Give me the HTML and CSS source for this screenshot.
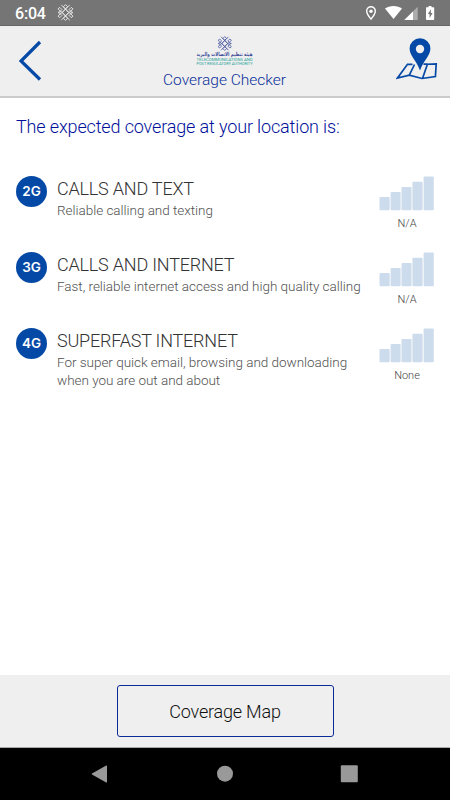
FILE: index.html
```
<!DOCTYPE html>
<html lang="en">
<head>
  <meta charset="UTF-8" />
  <meta name="viewport" content="width=device-width, initial-scale=1" />
  <title>Coverage Checker</title>
  <link rel="stylesheet" href="styles.css">
</head>
<body>

  <svg class="defs" width="0" height="0">
    <symbol id="knot" viewBox="0 0 16 16">
      <path d="M8 4.8L11.2 8 8 11.2 4.8 8zM4 .8l8.2 8.2 2.8-.9M12 .8L3.8 9 1 8.1M4 15.2L12.2 7l2.8.9M12 15.2L3.8 7 1 7.9M8 .6l2 2-2 2-2-2zM8 11.4l2 2-2 2-2-2zM1 4.5l1.6-1.3 2 2L3 6.8zM15 4.5l-1.6-1.3-2 2L13 6.8zM1 11.5l1.6 1.3 2-2L3 9.2zM15 11.5l-1.6 1.3-2-2L13 9.2z" fill="none" stroke="currentColor" stroke-width=".9" />
    </symbol>
    <symbol id="bars" viewBox="0 0 56 36">
      <g fill="#cddcec">
        <rect x=".5" y="21" width="10.2" height="13.2" rx="1" />
        <rect x="11.6" y="16" width="10" height="18.2" rx="1" />
        <rect x="22.5" y="10.9" width="10" height="23.3" rx="1" />
        <rect x="33.4" y="5.8" width="10.2" height="28.4" rx="1" />
        <rect x="44.6" y=".5" width="10.2" height="33.7" rx="1" />
      </g>
    </symbol>
  </svg>

  <div class="status-bar">
    <span class="time">6:04</span>
    <svg class="status-knot" width="17" height="17"><use href="#knot" /></svg>
    <svg class="status-icons" width="76" height="26" viewBox="0 0 76 26" fill="#fff">
      <path d="M7 6.8a4.3 4.3 0 0 0-4.3 4.3c0 3.2 4.3 8 4.3 8s4.3-4.8 4.3-8A4.3 4.3 0 0 0 7 6.8z" fill="none" stroke="#fff" stroke-width="1.4" />
      <circle cx="7" cy="11.2" r="1.7" />
      <path d="M21 8.6C25.5 5 33.5 5 38 8.6L29.5 19z" />
      <path d="M53.7 6.8V20H40.3z" opacity=".4" />
      <path d="M49 11.5V20h-8.7z" />
      <path d="M62.5 7.2h2V5.9h3v1.3h2q.7 0 .7.7v11.3q0 .8-.8.8h-6.6q-.8 0-.8-.8V7.9q0-.7.5-.7z" />
      <path d="M67 9.2l-3.200 4.800h1.800v4l3-5h-1.800z" fill="#757575" />
    </svg>
  </div>

  <header>
    <svg width="24" height="42" viewBox="0 0 24 42">
      <path d="M21 2L2 21l19 18.5" fill="none" stroke="#0549a6" stroke-width="3.2" />
    </svg>
    <div class="brand">
      <svg class="logo" width="70" height="31" viewBox="0 0 70 31">
        <use href="#knot" x="28" y="0" width="15.5" height="15" color="#4d5aa3" />
        <text class="brand-ar" transform="translate(35.5 20.3) scale(.73 1)" text-anchor="middle" direction="rtl">هيئة تنظيم الاتصالات والبريد</text>
        <text class="brand-en" x="7.5" y="25" textLength="56" lengthAdjust="spacingAndGlyphs">TELECOMMUNICATIONS AND</text>
        <text class="brand-en" x="7.5" y="28.7" textLength="56" lengthAdjust="spacingAndGlyphs">POST REGULATORY AUTHORITY</text>
      </svg>
      <h1>Coverage Checker</h1>
    </div>
    <svg width="42" height="45" viewBox="0 0 42 45">
      <path d="M16.5 27.3h-5L1.5 41l11.800-2.800 12.700 3.300 13.400-2 .8-12.700-8.800.4-4.900 14.300M18.500 27.500l-5.200 10.700M27.500 27.200h4" fill="none" stroke="#0549a6" stroke-width="1.7" />
      <path d="M24 1.2A10.400 10.400 0 0 0 13.600 11.600c0 7 6.500 11.500 10.400 22 3.900-10.500 10.400-15 10.400-22A10.400 10.400 0 0 0 24 1.200z" fill="#0549a6" />
      <circle cx="24" cy="12" r="4.2" fill="#efefef" />
    </svg>
  </header>

  <main>
    <h2>The expected coverage at your location is:</h2>

    <div class="service">
      <span class="badge">2G</span>
      <div class="info">
        <h3>CALLS AND TEXT</h3>
        <p>Reliable calling and texting</p>
      </div>
      <div class="signal">
        <svg width="56" height="36"><use href="#bars" /></svg>
        <span>N/A</span>
      </div>
    </div>

    <div class="service">
      <span class="badge">3G</span>
      <div class="info">
        <h3>CALLS AND INTERNET</h3>
        <p>Fast, reliable internet access and high quality calling</p>
      </div>
      <div class="signal">
        <svg width="56" height="36"><use href="#bars" /></svg>
        <span>N/A</span>
      </div>
    </div>

    <div class="service">
      <span class="badge">4G</span>
      <div class="info">
        <h3>SUPERFAST INTERNET</h3>
        <p>For super quick email, browsing and downloading<br>when you are out and about</p>
      </div>
      <div class="signal">
        <svg width="56" height="36"><use href="#bars" /></svg>
        <span>None</span>
      </div>
    </div>
  </main>

  <footer>
    <button>Coverage Map</button>
  </footer>

  <nav>
    <svg width="18" height="20" viewBox="0 0 18 20" fill="#999"><path d="M16 2v16q0 .8-.8.4L1 10.4q-.8-.4 0-.8L15.2 1.5q.8-.3.8.5z" /></svg>
    <svg width="18" height="20" viewBox="0 0 18 20" fill="#999"><circle cx="9" cy="9.7" r="8" /></svg>
    <svg width="18" height="20" viewBox="0 0 18 20" fill="#999"><rect x=".8" y="1.3" width="17" height="17" rx="1" /></svg>
  </nav>

</body>
</html>
```

FILE: styles.css
```
* {
  box-sizing: border-box;
}

body {
  margin: 0;
  height: 800px;
  font-family: Roboto, sans-serif;
  font-weight: 300;
  background-color: #fff;
  color: #333;
  display: flex;
  flex-direction: column;
  overflow: hidden;
}

svg {
  display: block;
  flex: none;
}

.defs {
  position: absolute;
}

.status-bar {
  height: 26px;
  background-color: #757575;
  border-bottom: 1px solid #666;
  color: #fff;
  display: flex;
  align-items: center;
  padding: 0 10px 0 15px;
}

.time {
  width: 42px;
  font-size: 16px;
  font-weight: 500;
  line-height: 26px;
  letter-spacing: -0.2px;
  padding-top: 2px;
}

.status-knot {
  color: #e8e8e8;
}

.status-icons {
  margin-left: auto;
}

header {
  height: 72px;
  background-color: #efefef;
  border-bottom: 2px solid #cbcbcb;
  display: flex;
  justify-content: space-between;
  padding: 0 12px 0 19px;
}

header > svg {
  margin-top: 14px;
}

header > svg:last-child {
  margin-top: 11px;
}

.brand {
  display: flex;
  flex-direction: column;
  align-items: center;
  padding-top: 10px;
  margin-left: 10px;
}

.logo {
  overflow: visible;
}

.brand-ar {
  font-family: "DejaVu Sans", sans-serif;
  font-size: 5.5px;
  font-weight: bold;
  fill: #3e4c9a;
}

.brand-en {
  font-size: 3.4px;
  font-weight: 400;
  fill: #25a097;
}

h1 {
  margin: 3px 0 0;
  font-size: 15.5px;
  font-weight: 300;
  line-height: 20px;
  color: #0b2f9b;
}

main {
  flex: 1;
  padding: 17px 15px 0 16px;
}

h2 {
  margin: 0 0 38px;
  font-size: 18px;
  font-weight: 300;
  line-height: 24px;
  letter-spacing: -0.14px;
  color: #00109a;
}

.service {
  height: 76px;
  display: flex;
}

.badge {
  width: 31px;
  height: 31px;
  margin: -1px 10px 0 0;
  border-radius: 50%;
  background-color: #0549a6;
  color: #fff;
  font-family: Inter, sans-serif;
  font-size: 13.5px;
  font-weight: 600;
  line-height: 31px;
  text-align: center;
}

.info {
  flex: 1;
  padding-top: 1px;
  white-space: nowrap;
}

h3 {
  margin: 0 0 2px;
  font-size: 18px;
  font-weight: 300;
  line-height: 21px;
  letter-spacing: -0.2px;
}

p {
  margin: 0;
  font-size: 13.5px;
  line-height: 18px;
  letter-spacing: -0.03px;
  color: #505050;
}

.signal {
  width: 56px;
  font-size: 11px;
  line-height: 14px;
  text-align: center;
  color: #444;
}

.signal svg {
  margin-top: -1px;
}

.signal span {
  display: block;
  margin-top: 5px;
}

footer {
  height: 73px;
  background-color: #efefef;
  border-bottom: 1px solid #aaa;
  padding-top: 10px;
  text-align: center;
}

button {
  width: 217px;
  height: 52px;
  font-family: inherit;
  font-size: 18px;
  font-weight: 300;
  letter-spacing: -0.2px;
  color: #111;
  background: none;
  border: 1px solid #0a2c96;
  border-radius: 3px;
}

nav {
  height: 52px;
  background-color: #000;
  display: flex;
  justify-content: space-between;
  padding: 16px 92px 0 91px;
}
```
